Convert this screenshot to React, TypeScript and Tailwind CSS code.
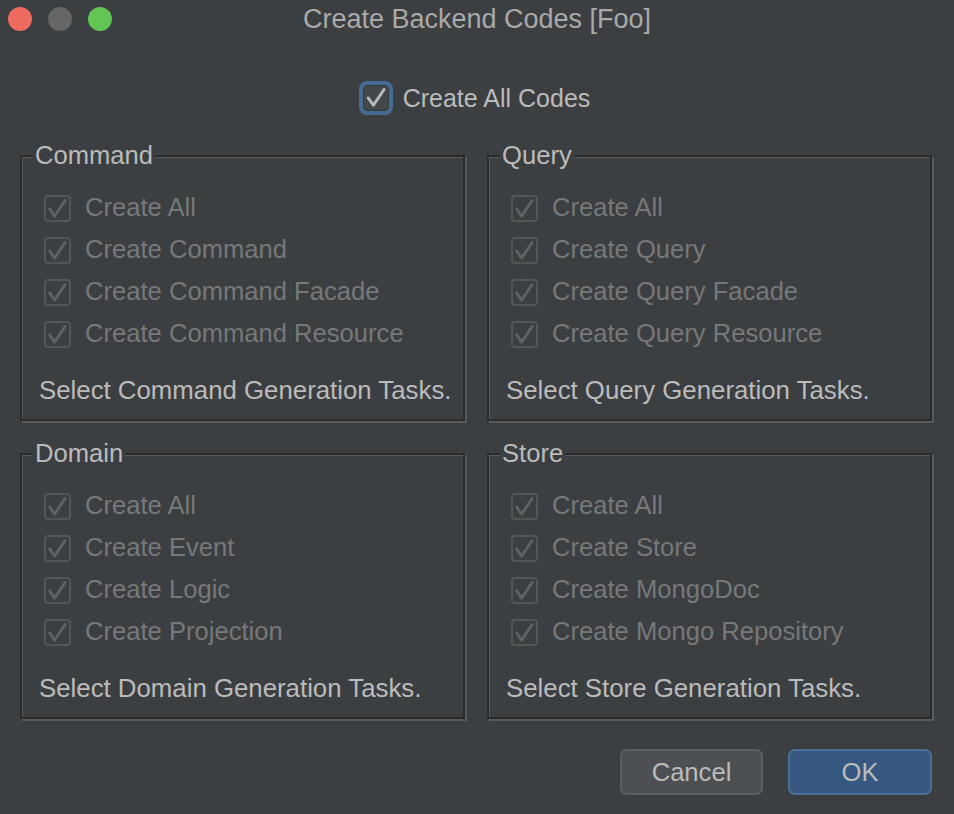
import React from 'react';

type Group = { title: string; items: string[]; footer: string };

const groups: Group[] = [
  {
    title: 'Command',
    items: ['Create All', 'Create Command', 'Create Command Facade', 'Create Command Resource'],
    footer: 'Select Command Generation Tasks.',
  },
  {
    title: 'Query',
    items: ['Create All', 'Create Query', 'Create Query Facade', 'Create Query Resource'],
    footer: 'Select Query Generation Tasks.',
  },
  {
    title: 'Domain',
    items: ['Create All', 'Create Event', 'Create Logic', 'Create Projection'],
    footer: 'Select Domain Generation Tasks.',
  },
  {
    title: 'Store',
    items: ['Create All', 'Create Store', 'Create MongoDoc', 'Create Mongo Repository'],
    footer: 'Select Store Generation Tasks.',
  },
];

function Check({ color, d, width }: { color: string; d: string; width: number }) {
  return (
    <svg viewBox="0 0 23 23" className="w-full h-full block">
      <path d={d} fill="none" stroke={color} strokeWidth={width} strokeLinecap="round" strokeLinejoin="round" />
    </svg>
  );
}

function DisabledCheckbox({ label }: { label: string }) {
  return (
    <div className="flex items-center h-[42px]">
      <div className="w-[27px] h-[27px] rounded-[4px] border-2 border-[#535657] shrink-0">
        <Check color="#606365" width={2.8} d="M3.6 11.8 L8.6 19.2 L19 3.6" />
      </div>
      <span className="ml-[14px] text-[25.6px] text-[#76787a] leading-none">{label}</span>
    </div>
  );
}

function GroupBox({ group }: { group: Group }) {
  return (
    <div className="relative h-[266px] border-2 border-[#2a2b2c] shadow-[inset_1px_1px_0_#58595a,2px_2px_0_#58595a] pl-[22px] pt-[30px]">
      <div className="absolute -top-[17px] left-[11px] px-[2px] bg-[#3c3f41] text-[25.6px] leading-[30px] text-[#bbbbbb]">
        {group.title}
      </div>
      {group.items.map((item, i) => (
        <DisabledCheckbox key={i} label={item} />
      ))}
      <div className="-ml-[5px] mt-[21px] text-[25.8px] leading-[28px] text-[#bbbbbb]">{group.footer}</div>
    </div>
  );
}

export default function App() {
  return (
    <div
      className="w-[954px] h-[814px] bg-[#3c3f41] flex flex-col overflow-hidden"
      style={{ fontFamily: '"Liberation Sans", Arial, sans-serif' }}
    >
      {/* title bar */}
      <div className="h-[37px] grid grid-cols-[1fr_auto_1fr] items-center">
        <div className="flex items-center gap-[16px] pl-[8px]">
          <span className="w-[24px] h-[24px] rounded-full bg-[#ed6a5e]" />
          <span className="w-[24px] h-[24px] rounded-full bg-[#656667]" />
          <span className="w-[24px] h-[24px] rounded-full bg-[#62c554]" />
        </div>
        <div className="text-[27px] text-[#a9a9a9] leading-none pt-[2px]">Create Backend Codes [Foo]</div>
        <div />
      </div>

      {/* create all codes */}
      <div className="mt-[44px] pr-[5px] flex justify-center items-center">
        <div className="w-[34px] h-[34px] rounded-[8px] bg-[#466b93] p-[4px]">
          <div className="w-full h-full rounded-[4px] bg-[#43494b] border border-[#33393c]">
            <Check color="#bbbbbb" width={2.8} d="M4 11.5 L9 18.4 L19.2 3.4" />
          </div>
        </div>
        <span className="ml-[10px] text-[25px] text-[#bbbbbb] leading-none">Create All Codes</span>
      </div>

      {/* groups */}
      <div className="mt-[40px] pl-[20px] grid grid-cols-[445px_445px] gap-x-[22px] gap-y-[32px]">
        {groups.map((g) => (
          <GroupBox key={g.title} group={g} />
        ))}
      </div>

      {/* buttons */}
      <div className="mt-auto mb-[19px] mr-[22px] flex justify-end gap-[25px]">
        <button className="w-[143px] h-[46px] rounded-[7px] bg-[#4c5052] border-2 border-[#5a5e60] text-[25.6px] text-[#bbbbbb]">
          Cancel
        </button>
        <button className="w-[144px] h-[46px] rounded-[7px] bg-[#365880] border-2 border-[#4b6f96] text-[25.6px] text-[#bbbbbb]">
          OK
        </button>
      </div>
    </div>
  );
}
